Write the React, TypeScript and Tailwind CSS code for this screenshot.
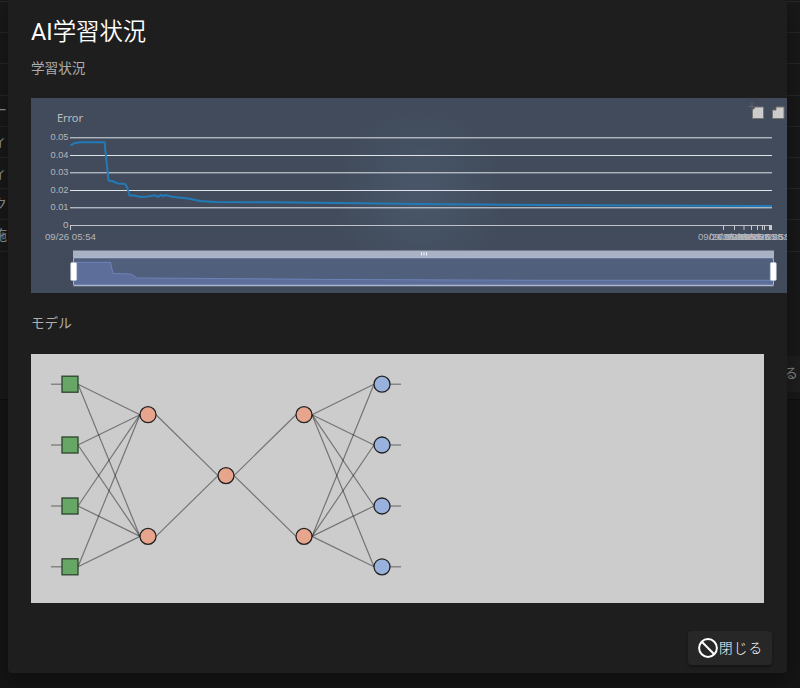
import React from "react";

const JP = "font-['Roboto','Noto_Sans_CJK_JP',sans-serif]";

const rowLabels = ["", "", "", "", "ー", "ィ.", "ィ.", "ク", "施"];
const yTicks = [
  { label: "0.05", y: 39.8 },
  { label: "0.04", y: 57.5 },
  { label: "0.03", y: 74.8 },
  { label: "0.02", y: 92.5 },
  { label: "0.01", y: 109.8 },
  { label: "0", y: 127.5 },
];
const xTicks = [39.5, 692.5, 703.5, 713, 720.5, 726.5, 731.5, 733.5, 738.5, 739.5, 740.5];
const dates = ["09/26 05:56", "09/26 05:56", "09/28 05:57", "09/26 05:57", "09/26 05:58", "09/26 05:58", "09/26 05:59"];
const dateX = [692.5, 703.5, 713, 720.5, 726.5, 733, 740];

function ErrorChart() {
  return (
    <div className="h-[195px] w-[756px] shrink-0 overflow-hidden bg-[#414b5c]">
      <svg width="756" height="195" viewBox="0 0 756 195" className="block">
        <defs>
          <radialGradient id="glow" gradientUnits="userSpaceOnUse" cx="389" cy="97" r="85">
            <stop offset="0" stopColor="#4a566a" />
            <stop offset=".5" stopColor="#455263" />
            <stop offset="1" stopColor="#414b5b" />
          </radialGradient>
        </defs>
        <rect width="756" height="195" fill="#414b5b" />
        <circle cx="389" cy="97" r="85" fill="url(#glow)" />
        <text x="26" y="24" fontSize="11" fill="#bdbec1" fontFamily="Noto Sans, sans-serif" textLength="26">Error</text>
        {yTicks.map((t) => (
          <g key={t.label}>
            <line x1="39" x2="741" y1={t.y} y2={t.y} stroke={t.label === "0" ? "#bfc2c8" : "#dfe3ea"} strokeWidth="1" />
            <text x="37.5" y={Math.round(t.y + 2.2)} fontSize="8.6" textAnchor="end" fill="#b4b6bb" fontFamily="Liberation Sans, sans-serif" textLength={t.label === "0" ? 5.5 : 18} lengthAdjust="spacingAndGlyphs">{t.label}</text>
          </g>
        ))}
        {xTicks.map((x) => <path key={x} d={`M${x} 127v5`} stroke="#c8cacf" />)}
        <g fontSize="8.6" fill="#b4b6bb" textAnchor="middle" fontFamily="Liberation Sans, sans-serif">
          <text x="39.5" y="142" textLength="51" lengthAdjust="spacingAndGlyphs">09/26 05:54</text>
          {dates.map((d, i) => <text key={i} x={dateX[i]} y="142" textLength="51" lengthAdjust="spacingAndGlyphs">{d}</text>)}
        </g>
        <path d="M39.500 47.500 43 45.300 49 44.200H73.500L77.500 82.500 81 83 87 85.500 94 86 96 89 98.500 97.500H103L110 99 117 98.500 124 97.300 127 98.800 130 96.800 132 98.300 134.500 97 141 98.800 157 100.500 169 103 184 104 240 104.200 309 104.900 409 106.300 509 107.100 609 107.500 741 108" fill="none" stroke="#227bb8" strokeWidth="2" strokeLinejoin="round" />
        <rect x="42" y="152.500" width="701" height="7" fill="#a9b2c5" />
        <rect x="42.500" y="159.500" width="700" height="28" rx="1.500" fill="#505f7b" stroke="#a4b2ce" />
        <path d="M43 166q1-1.700 4-1.700H79.500L82 175.500 100 176 106 180 169 180.400 309 181.500 509 182.300H742V187H43Z" fill="#5c6e99" />
        <path d="M43 166q1-1.700 4-1.700H79.500L82 175.500 100 176 106 180 169 180.400 309 181.500 509 182.300H742" fill="none" stroke="#6d83b7" />
        <path d="M42.500 159.500h700M42.500 187.500h700" stroke="#aab6cd" strokeWidth="1.3" />
        <path d="M390.500 154v3.500m2.500-3.500v3.500m2.500-3.500v3.500" stroke="#f0f2f7" />
        <rect x="39.700" y="164.500" width="6" height="18" rx="1.200" fill="#fff" stroke="#b8c3d9" strokeWidth=".6" />
        <rect x="739.300" y="164.500" width="6" height="18" rx="1.200" fill="#fff" stroke="#b8c3d9" strokeWidth=".6" />
        <g fill="#ccc" stroke="#77736f" strokeWidth="1">
          <path d="M724.500 9h8v11.500h-11v-8.500Z" />
          <path d="M741.500 12v8.500h11.500v-11.500h-8v3Z" />
        </g>
        <path d="M717.500 8.500h7m-3.500-4v7" stroke="#626366" />
        <path d="m744.500 6-3 3 3 3M742 9h3" fill="none" stroke="#4c4e50" />
      </svg>
    </div>
  );
}

const outerRows = [30.2, 91, 152, 212.800];
const hidden = [60.7, 182.4];
function Model() {
  return (
    <div className="h-[249px] w-[733px] bg-[#ccc]">
      <svg width="733" height="249" className="block">
        <g stroke="#000" strokeOpacity=".43" strokeWidth="1.2">
          {outerRows.map((a) => <React.Fragment key={a}>
            <line x1="20" x2="31" y1={a} y2={a} /><line x1="359" x2="370" y1={a} y2={a} />
            {hidden.map((b) => <React.Fragment key={b}>
              <line x1="47" y1={a} x2="109" y2={b} /><line x1="281" y1={b} x2="343" y2={a} />
            </React.Fragment>)}
          </React.Fragment>)}
          {hidden.map((a) => <React.Fragment key={a}><line x1="125" y1={a} x2="187" y2="121.600" /><line x1="203" y1="121.600" x2="265" y2={a} /></React.Fragment>)}
        </g>
        <g stroke="#222" strokeWidth="1.3">
          {outerRows.map((y) => <React.Fragment key={y}><rect x="31" y={y - 8} width="16" height="16" fill="#66a766" stroke="#2d422d" /><circle cx="351" cy={y} r="8" fill="#98b1dd" /></React.Fragment>)}
          {hidden.map((y) => <React.Fragment key={y}><circle cx="117" cy={y} r="8" fill="#e8a58d" /><circle cx="273" cy={y} r="8" fill="#e8a58d" /></React.Fragment>)}
          <circle cx="195" cy="121.600" r="8" fill="#e8a58d" />
        </g>
      </svg>
    </div>
  );
}

export default function App() {
  return (
    <div className={`relative h-[688px] w-full overflow-hidden bg-[#161616] ${JP}`}>
      <div className="h-[400px] border-b border-[#101010] bg-[#1a1a1a]">
        {rowLabels.map((label, i) => (
          <div key={i} className={`flex items-center border-b border-[#282828] text-[14px] whitespace-nowrap text-[#999] ${i === 0 ? "h-[2px]" : "h-[31.2px]"}`}>
            <span className="-ml-[7px]">{label}</span>
          </div>
        ))}
        <div className="mt-[104px] ml-auto flex h-[36px] w-[84px] items-center justify-end bg-[#202020] pr-[2px] text-[14px] text-[#888]">る</div>
      </div>
      <section className="absolute top-0 left-[8px] flex h-[673px] w-[779px] flex-col overflow-hidden rounded-[4px] bg-[#1e1e1e] pl-[23px] shadow-[0_8px_24px_4px_rgba(0,0,0,.35)]">
        <h1 className="mt-[14px] h-[36px] text-[23.4px] leading-[36px] font-[350] text-white"><span className="font-normal">AI</span>学習状況</h1>
        <h2 className="mt-[8px] h-[20px] text-[13.6px] leading-[20px] font-normal text-[#adadad]">学習状況</h2>
        <div className="mt-[20px]"><ErrorChart /></div>
        <h2 className="mt-[20px] h-[20px] text-[13.6px] leading-[20px] font-normal text-[#adadad]">モデル</h2>
        <div className="mt-[21px]"><Model /></div>
        <button className="mt-[28px] mr-[15px] flex h-[34px] w-[84px] items-center self-end rounded-[4px] bg-[#272727] pl-[9px] text-[13.600px] tracking-[1.1px] whitespace-nowrap text-white shadow-[0_2px_3px_rgba(0,0,0,.35)]">
          <svg width="22" height="22" viewBox="0 0 22 22" className="shrink-0" fill="none" stroke="#fff" strokeWidth="2"><circle cx="11" cy="11" r="8.900" /><path d="m4.800 4.800 12.400 12.400" /></svg>
          <span className="font-light">閉じる</span>
        </button>
      </section>
    </div>
  );
}
